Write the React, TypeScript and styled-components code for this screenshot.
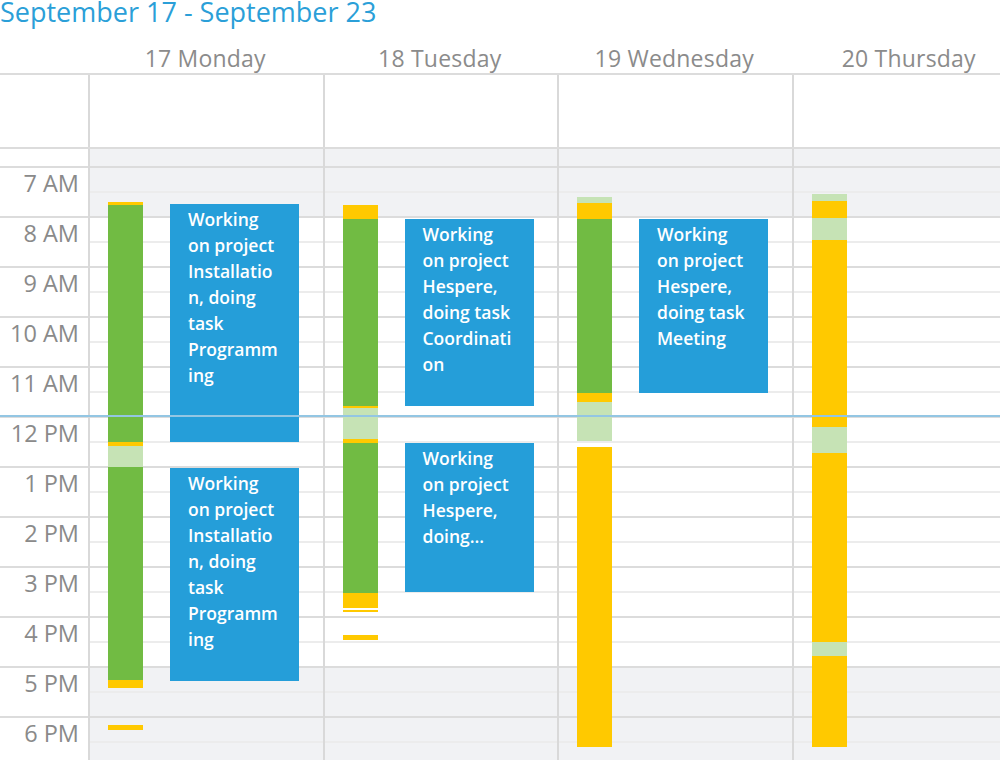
import React from "react";
import styled, { createGlobalStyle } from "styled-components";

const GlobalStyle = createGlobalStyle`
  html, body { margin: 0; padding: 0; background: #ffffff; }
  body { font-family: "Open Sans", "Noto Sans", sans-serif; }
`;

const TIME_W = 88;
const COL_W = 234.5;
const PX_PER_MIN = 50 / 60;
const FIRST_SLOT = 19;

const toMin = (t: string) => {
  const [h, m] = t.split(":").map(Number);
  return h * 60 + m;
};
// y inside the body: 7:00 sits at FIRST_SLOT - 1 (center of the hour line)
const timeToY = (t: string) => FIRST_SLOT - 1 + (toMin(t) - 420) * PX_PER_MIN;

type SegKind = "g" | "y" | "l";
type Seg = [string, string, SegKind];
interface CalEvent {
  start: string;
  end: string;
  lines: string[];
}
interface Day {
  label: string;
  segs: Seg[];
  events: CalEvent[];
}

const SEG_COLORS: Record<SegKind, string> = {
  g: "#71bb43",
  y: "#ffc900",
  l: "#c6e3b5",
};

const days: Day[] = [
  {
    label: "17 Monday",
    segs: [
      ["07:42", "07:46", "y"],
      ["07:46", "12:30", "g"],
      ["12:30", "12:35", "y"],
      ["12:35", "13:00", "l"],
      ["13:00", "17:16", "g"],
      ["17:16", "17:25", "y"],
      ["18:10", "18:16", "y"],
    ],
    events: [
      {
        start: "07:44",
        end: "12:30",
        lines: ["Working", "on project", "Installatio", "n, doing", "task", "Programm", "ing"],
      },
      {
        start: "13:01",
        end: "17:17",
        lines: ["Working", "on project", "Installatio", "n, doing", "task", "Programm", "ing"],
      },
    ],
  },
  {
    label: "18 Tuesday",
    segs: [
      ["07:46", "08:02", "y"],
      ["08:02", "11:47", "g"],
      ["11:47", "11:49", "y"],
      ["11:49", "12:26", "l"],
      ["12:26", "12:31", "y"],
      ["12:31", "15:31", "g"],
      ["15:31", "15:49", "y"],
      ["15:52", "15:54", "y"],
      ["16:22", "16:28", "y"],
    ],
    events: [
      {
        start: "08:02",
        end: "11:47",
        lines: ["Working", "on project", "Hespere,", "doing task", "Coordinati", "on"],
      },
      {
        start: "12:31",
        end: "15:30",
        lines: ["Working", "on project", "Hespere,", "doing…"],
      },
    ],
  },
  {
    label: "19 Wednesday",
    segs: [
      ["07:36", "07:43", "l"],
      ["07:43", "08:02", "y"],
      ["08:02", "11:31", "g"],
      ["11:31", "11:42", "y"],
      ["11:42", "12:29", "l"],
      ["12:36", "18:36", "y"],
    ],
    events: [
      {
        start: "08:02",
        end: "11:31",
        lines: ["Working", "on project", "Hespere,", "doing task", "Meeting"],
      },
    ],
  },
  {
    label: "20 Thursday",
    segs: [
      ["07:32", "07:41", "l"],
      ["07:41", "08:01", "y"],
      ["08:01", "08:28", "l"],
      ["08:28", "12:12", "y"],
      ["12:12", "12:43", "l"],
      ["12:43", "16:30", "y"],
      ["16:30", "16:47", "l"],
      ["16:47", "18:36", "y"],
    ],
    events: [],
  },
];

const hours = [7, 8, 9, 10, 11, 12, 13, 14, 15, 16, 17, 18];
const hourLabel = (h: number) => `${h > 12 ? h - 12 : h} ${h < 12 ? "AM" : "PM"}`;

// half-hour slots from 7:00 to 19:00
const slots = Array.from({ length: 24 }, (_, i) => {
  const startMin = 420 + i * 30;
  return {
    key: i,
    hourLine: i % 2 === 1,
    off: startMin < 480 || startMin >= 1020,
  };
});

const Page = styled.div`
  width: 1000px;
  height: 760px;
  overflow: hidden;
  background: #ffffff;
`;

const Title = styled.h1`
  margin: 0;
  height: 28px;
  font-size: 27px;
  line-height: 24px;
  font-weight: 400;
  color: #2b9fd8;
  white-space: nowrap;
`;

const Columns = styled.div`
  display: grid;
  grid-template-columns: ${TIME_W}px repeat(4, ${COL_W}px);
  width: max-content;
`;

const HeaderRow = styled(Columns)`
  height: 45px;
  border-bottom: 2px solid #dcdcdc;
  box-sizing: content-box;
`;

const DayLabel = styled.div`
  padding-top: 17px;
  text-align: center;
  font-size: 23px;
  line-height: 26px;
  letter-spacing: 0.2px;
  color: #8b8b8b;
  white-space: nowrap;
`;

const AllDayRow = styled(Columns)`
  height: 72px;
  border-bottom: 2px solid #dcdcdc;
  box-sizing: content-box;
`;

const AllDayCell = styled.div`
  border-left: 2px solid #d9d9d9;
`;

const Body = styled(Columns)`
  position: relative;
`;

const TimeColumn = styled.div`
  display: flex;
  flex-direction: column;
`;

const TimeRow = styled.div<{ $h: number }>`
  box-sizing: border-box;
  height: ${(p) => p.$h}px;
  border-bottom: 2px solid #dcdcdc;
  padding: 1px 9px 0 0;
  text-align: right;
  font-size: 23.5px;
  line-height: 28px;
  color: #8a8a8a;
  white-space: nowrap;
`;

const DayColumn = styled.div`
  position: relative;
  display: flex;
  flex-direction: column;
  border-left: 2px solid #d9d9d9;
`;

const Slot = styled.div<{ $h: number; $hourLine: boolean; $off: boolean }>`
  box-sizing: border-box;
  height: ${(p) => p.$h}px;
  flex: none;
  background: ${(p) => (p.$off ? "#f1f2f4" : "#ffffff")};
  border-bottom: 2px solid ${(p) => (p.$hourLine ? "#dcdcdc" : "#ececec")};
`;

const BarSegment = styled.div<{ $kind: SegKind }>`
  position: absolute;
  left: 18px;
  width: 35px;
  background: ${(p) => SEG_COLORS[p.$kind]};
`;

const EventBox = styled.div`
  position: absolute;
  left: 80px;
  width: 129px;
  box-sizing: border-box;
  padding: 2px 4px 0 18px;
  background: #259ed9;
  color: #ffffff;
  overflow: hidden;
`;

const EventLine = styled.div`
  font-size: 17.5px;
  font-weight: 600;
  line-height: 26px;
  white-space: nowrap;
`;

const NowLine = styled.div`
  position: absolute;
  left: 0;
  width: 1000px;
  height: 2px;
  background: #93c6e3;
`;

const NOW = "11:59";

export default function App() {
  return (
    <Page>
      <GlobalStyle />
      <Title>September 17 - September 23</Title>
      <HeaderRow>
        <div />
        {days.map((d) => (
          <DayLabel key={d.label}>{d.label}</DayLabel>
        ))}
      </HeaderRow>
      <AllDayRow>
        <div />
        {days.map((d) => (
          <AllDayCell key={d.label} />
        ))}
      </AllDayRow>
      <Body>
        <TimeColumn>
          <TimeRow $h={FIRST_SLOT} />
          {hours.map((h) => (
            <TimeRow key={h} $h={50}>
              {hourLabel(h)}
            </TimeRow>
          ))}
        </TimeColumn>
        {days.map((d) => (
          <DayColumn key={d.label}>
            <Slot $h={FIRST_SLOT} $hourLine $off />
            {slots.map((s) => (
              <Slot key={s.key} $h={25} $hourLine={s.hourLine} $off={s.off} />
            ))}
            {d.segs.map(([a, b, k], i) => (
              <BarSegment
                key={i}
                $kind={k}
                style={{ top: timeToY(a), height: timeToY(b) - timeToY(a) }}
              />
            ))}
            {d.events.map((e, i) => (
              <EventBox
                key={i}
                style={{ top: timeToY(e.start), height: timeToY(e.end) - timeToY(e.start) }}
              >
                {e.lines.map((l, j) => (
                  <EventLine key={j}>{l}</EventLine>
                ))}
              </EventBox>
            ))}
          </DayColumn>
        ))}
        <NowLine style={{ top: timeToY(NOW) - 1 }} />
      </Body>
    </Page>
  );
}
